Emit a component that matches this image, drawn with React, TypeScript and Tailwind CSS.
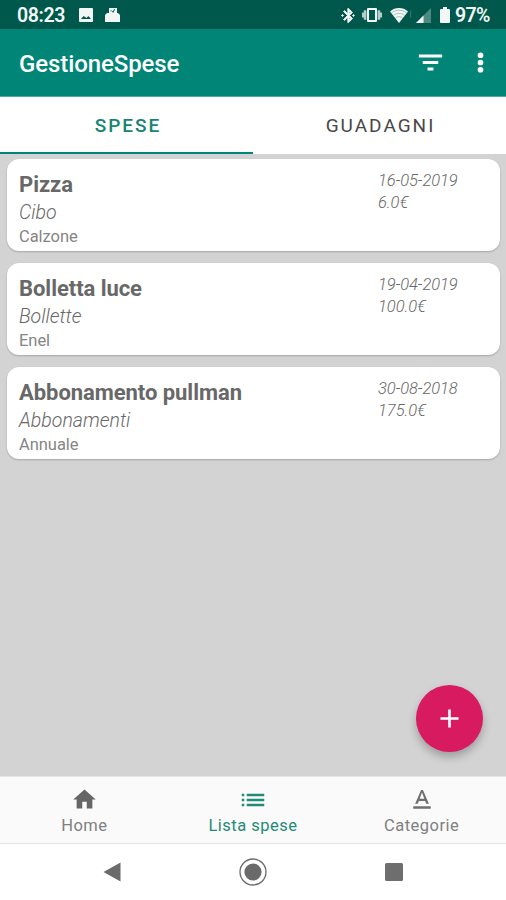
import type { ReactNode } from "react";

type Expense = {
  title: string;
  category: string;
  note: string;
  date: string;
  amount: string;
};

const expenses: Expense[] = [
  { title: "Pizza", category: "Cibo", note: "Calzone", date: "16-05-2019", amount: "6.0€" },
  { title: "Bolletta luce", category: "Bollette", note: "Enel", date: "19-04-2019", amount: "100.0€" },
  { title: "Abbonamento pullman", category: "Abbonamenti", note: "Annuale", date: "30-08-2018", amount: "175.0€" },
];

function Icon({ className, children }: { className?: string; children: ReactNode }) {
  return (
    <svg viewBox="0 0 24 24" fill="currentColor" className={`shrink-0 ${className ?? ""}`} aria-hidden="true">
      {children}
    </svg>
  );
}

function StatusBar() {
  return (
    <div className="flex h-[29px] shrink-0 items-center bg-[#00574b] pl-[17px] pr-[15px] pt-px text-[19.5px] font-semibold leading-none text-[#f2f7f6]">
      <span className="w-[49px] whitespace-nowrap pt-px tracking-[-0.4px]">08:23</span>
      <svg viewBox="0 0 14 14" className="ml-[13px] h-3.5 w-3.5" fill="currentColor">
        <path
          fillRule="evenodd"
          d="M1 0h12a1 1 0 0 1 1 1v12a1 1 0 0 1-1 1H1a1 1 0 0 1-1-1V1a1 1 0 0 1 1-1zM2 11h10L9.4 8 7.4 10 4.7 8z"
        />
      </svg>
      <svg viewBox="0 0 15 14" className="ml-3 h-3.5 w-[15px]" fill="currentColor">
        <path
          fillRule="evenodd"
          d="M4 0h8v5h1l2 2v7H0V7l2-2h2zM5.6 2.2v1h1v-1zM9 1 8 3.4l-.8-.5-.5.8 1.6 1L10 1.6z"
        />
      </svg>
      <div className="ml-auto flex items-center">
        <Icon className="h-[17px] w-[17px]">
          <path
            stroke="currentColor"
            strokeWidth="1.2"
            d="M14.88 16.29 13 18.17v-3.76l1.88 1.88zM13 5.83l1.88 1.88L13 9.59V5.83zm4.71 1.88L12 2h-1v7.59L6.41 5 5 6.41 10.59 12 5 17.59 6.41 19 11 14.41V22h1l5.71-5.71-4.3-4.29 4.3-4.29zM3.6 10.6 2.2 12l1.4 1.4L5 12zm15.4 0L17.6 12l1.4 1.4 1.4-1.4z"
          />
        </Icon>
        <svg viewBox="0 0 20 14" className="ml-[5px] h-3.5 w-5" fill="currentColor">
          <path fillRule="evenodd" d="M6 0h8a1 1 0 0 1 1 1v12a1 1 0 0 1-1 1H6a1 1 0 0 1-1-1V1a1 1 0 0 1 1-1zm1 2v10h6V2z" />
          <path d="M1.8 2.2h2.6v9.6H1.8zM0 4.4h1.8v5.2H0zM15.6 2.2h2.6v9.6h-2.6zM18.2 4.4H20v5.2h-1.8z" opacity="0.75" />
        </svg>
        <svg viewBox="0 0 22 15" className="ml-2 h-[15px] w-[22px]">
          <path fill="currentColor" d="M0 3.4C5-1.1 13-1.1 18 3.4L9 15z" />
          <path fill="none" stroke="#00574b" strokeOpacity="0.4" strokeWidth="0.8" d="M1.5 4.9c4.5-3.6 10.500-3.600 15 0M3.400 7.400c3.400-2.700 7.800-2.700 11.200 0M5.400 9.900c2.200-1.700 5-1.700 7.200 0" />
          <path fill="#2f746a" d="M20 2.5h1.2v7H20z" />
        </svg>
        <svg viewBox="0 0 15 15" className="ml-1 h-[15px] w-[15px]">
          <path fill="#4f8a82" d="M15 0v15H0z" />
          <path fill="currentColor" d="M7.5 7.5V15H0z" />
        </svg>
        <svg viewBox="0 0 10 16" className="ml-[9px] h-4 w-2.5" fill="currentColor">
          <path d="M3 0h4v2h2a1 1 0 0 1 1 1v12a1 1 0 0 1-1 1H1a1 1 0 0 1-1-1V3a1 1 0 0 1 1-1h2z" />
        </svg>
        <span className="ml-[5px] w-[36px] whitespace-nowrap pt-px tracking-[-0.6px]">97%</span>
      </div>
    </div>
  );
}

function AppBar() {
  return (
    <header className="flex h-[67px] shrink-0 items-center bg-[#008577] pl-[19px] pr-[10px] text-white">
      <h1 className="pt-0.5 text-[24px] font-medium leading-none tracking-[-0.1px]">GestioneSpese</h1>
      <Icon className="ml-auto h-[31px] w-[31px]">
        <path d="M9.7 18.2h4.600v-2.400H9.700zM3 5.800v2.300h18V5.800zm3 7.300h12v-2.300H6z" />
      </Icon>
      <Icon className="ml-[19px] h-[31px] w-[31px]">
        <circle cx="12" cy="6.4" r="2.2" />
        <circle cx="12" cy="12" r="2.2" />
        <circle cx="12" cy="17.6" r="2.2" />
      </Icon>
    </header>
  );
}

function Tabs() {
  return (
    <div className="grid h-[58px] shrink-0 grid-cols-2 border-t border-[#55ab9f] bg-white text-[19px] leading-none tracking-[2px]">
      <div className="flex items-center justify-center border-b-2 border-[#008577] pl-[3px] pt-0.5 font-medium text-[#158473]">
        SPESE
      </div>
      <div className="flex items-center justify-center pl-0.5 text-[#484848]">GUADAGNI</div>
    </div>
  );
}

function ExpenseCard({ expense }: { expense: Expense }) {
  return (
    <article className="flex h-[92px] shrink-0 justify-between rounded-[12px] bg-white pl-3 pr-[42px] text-[#686868] shadow-[0_1px_2px_rgba(0,0,0,0.22)]">
      <div className="pt-3">
        <h2 className="text-[22px] font-bold leading-[28px] tracking-[-0.05px] text-[#686868]">{expense.title}</h2>
        <p className="text-[19.5px] font-light italic leading-[27px]">{expense.category}</p>
        <p className="text-[16.5px] leading-[21px] tracking-[-0.05px] text-[#858585]">{expense.note}</p>
      </div>
      <div className="w-[80px] whitespace-nowrap pt-[11px] text-[16.5px] font-light italic leading-[22px] tracking-[-0.05px]">
        <p>{expense.date}</p>
        <p>{expense.amount}</p>
      </div>
    </article>
  );
}

function BottomNav() {
  return (
    <nav className="grid h-[68px] shrink-0 grid-cols-3 border-y border-[#e6e6e6] bg-[#fafafa] text-[16.5px] leading-none tracking-[0.5px] text-[#808080]">
      <div className="flex flex-col items-center pt-[9px]">
        <Icon className="h-[27px] w-[27px] text-[#666]">
          <path d="M10 20v-6h4v6h5v-8h3L12 3 2 12h3v8z" />
        </Icon>
        <span className="mt-[5px]">Home</span>
      </div>
      <div className="flex flex-col items-center pt-2 text-[#248a78]">
        <Icon className="h-[30px] w-[30px]">
          <path d="M3 13h2v-2H3v2zm0 4h2v-2H3v2zm0-8h2V7H3v2zm4 4h14v-2H7v2zm0 4h14v-2H7v2zM7 7v2h14V7H7z" />
        </Icon>
        <span className="mt-[3px]">Lista spese</span>
      </div>
      <div className="flex flex-col items-center pt-2">
        <Icon className="h-[30px] w-[30px] text-[#707070]">
          <path d="M5 17v2h14v-2H5zm4.5-4.2h5l.9 2.2h2.1L12.75 4h-1.5L6.5 15h2.1l.9-2.2zM12 5.98 13.87 11h-3.74L12 5.98z" />
        </Icon>
        <span className="mt-[3px]">Categorie</span>
      </div>
    </nav>
  );
}

function SystemNav() {
  return (
    <div className="flex h-[56px] shrink-0 items-center justify-between bg-white px-[103px] text-[#6a6a6a]">
      <svg viewBox="0 0 18 20" className="h-5 w-[18px]" fill="currentColor">
        <path d="M17.5.5v19L.5 10z" />
      </svg>
      <svg viewBox="0 0 28 28" className="h-7 w-7" fill="currentColor">
        <circle cx="14" cy="14" r="13" fill="none" stroke="currentColor" strokeWidth="1.3" />
        <circle cx="14" cy="14" r="8.6" />
      </svg>
      <div className="h-[18px] w-[18px] rounded-[1.5px] bg-[#6e6e6e]" />
    </div>
  );
}

export default function App() {
  return (
    <div className="flex h-screen w-full flex-col overflow-hidden bg-[#d3d3d3] font-['Roboto',sans-serif]">
      <StatusBar />
      <AppBar />
      <Tabs />
      <main className="relative flex flex-1 flex-col gap-3 pl-[7px] pr-[6px] pt-[5px]">
        {expenses.map((expense) => (
          <ExpenseCard key={expense.title} expense={expense} />
        ))}
        <button
          type="button"
          aria-label="Aggiungi spesa"
          className="absolute bottom-[24px] right-[23px] flex h-[67px] w-[67px] items-center justify-center rounded-full bg-[#d81b60] text-white shadow-[0_5px_9px_rgba(0,0,0,0.25)]"
        >
          <Icon className="h-[31px] w-[31px]">
            <path d="M19 13h-6v6h-2v-6H5v-2h6V5h2v6h6v2z" />
          </Icon>
        </button>
      </main>
      <BottomNav />
      <SystemNav />
    </div>
  );
}
